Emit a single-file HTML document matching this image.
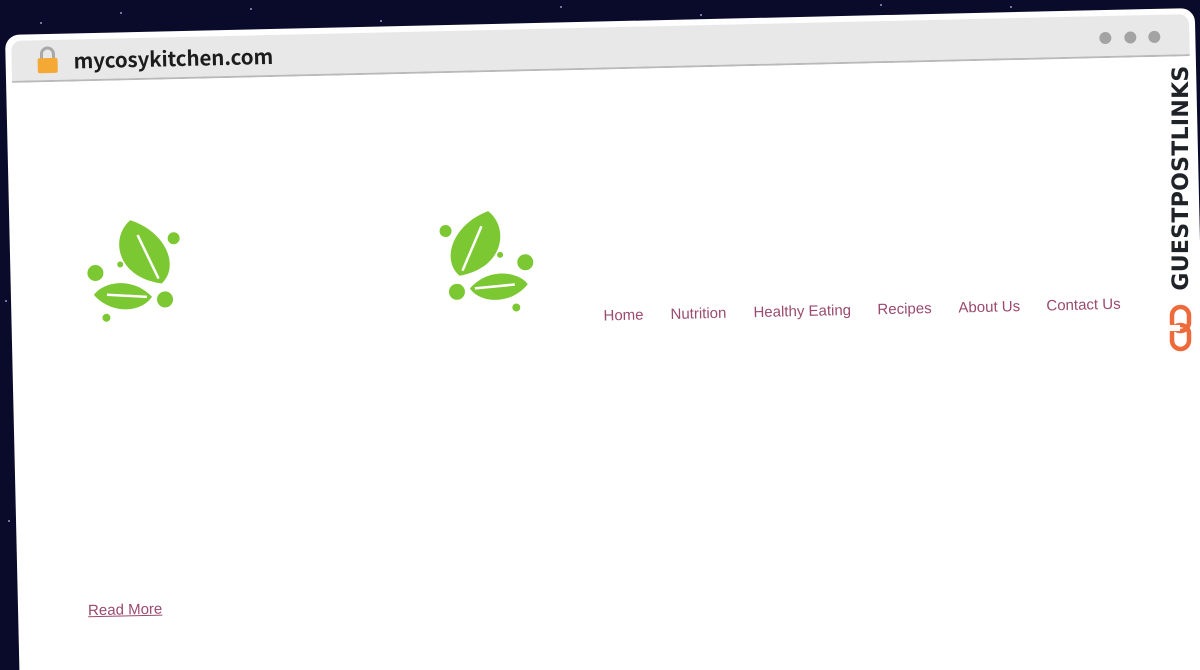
<!DOCTYPE html>
<html><head><meta charset="utf-8"><style>
html,body{margin:0;padding:0;width:1200px;height:670px;overflow:hidden;background:#0a0b2b;}
body{position:relative;font-family:"Liberation Sans",sans-serif;}
.star{position:absolute;width:2px;height:2px;background:#cfd3ff;border-radius:50%;opacity:.7}
#win{position:absolute;left:5px;top:35px;width:1190px;height:720px;background:#fff;border-radius:14px;transform-origin:0 0;transform:rotate(-1.3deg);overflow:hidden}
#bar{position:absolute;left:6px;top:6px;right:6px;height:40px;background:#e8e8e8;border-radius:10px 10px 0 0;border-bottom:2px solid #b9b9b9}
#url{position:absolute;left:62px;top:5px;font:bold 20.5px "Noto Sans CJK JP","DejaVu Sans",sans-serif;color:#1c1c1c;letter-spacing:-0.1px}
.dot{position:absolute;top:16px;width:12px;height:12px;border-radius:50%;background:#a3a3a3}
.nav{position:absolute;top:286px;font-size:15px;color:#9a4a6e;white-space:nowrap}
#rm{position:absolute;left:70px;top:569px;font-size:15px;color:#9a4a6e;text-decoration:underline}
#gpl{position:absolute;left:1165px;top:56px;width:34px;height:300px}
</style></head><body>
<div class="star" style="left:120px;top:12px"></div><div class="star" style="left:250px;top:8px"></div>
<div class="star" style="left:380px;top:20px"></div><div class="star" style="left:560px;top:6px"></div>
<div class="star" style="left:700px;top:14px"></div><div class="star" style="left:880px;top:4px"></div>
<div class="star" style="left:40px;top:22px"></div><div class="star" style="left:1010px;top:6px"></div>
<div class="star" style="left:5px;top:300px"></div><div class="star" style="left:8px;top:520px"></div>
<div id="win">
 <div id="bar">
  <svg style="position:absolute;left:24px;top:6px" width="24" height="28" viewBox="0 0 24 28"><path d="M6 13V8a6 6 0 0 1 12 0v5" fill="none" stroke="#a8a8a8" stroke-width="3"/><rect x="2" y="12" width="20" height="15" rx="2" fill="#f5a935"/></svg>
  <div id="url">mycosykitchen.com</div>
  <div class="dot" style="left:1088px"></div><div class="dot" style="left:1113px"></div><div class="dot" style="left:1137px"></div>
 </div>
 <svg style="position:absolute;left:76px;top:185px" width="100" height="106" viewBox="0 0 100 106">
  <g fill="#7cc832">
   <path d="M75 67C30 60 24 20 45 3C80 15 94 50 75 67Z"/>
   <path d="M65 80C45 58 15 65 7 77C25 98 55 95 65 80Z"/>
   <circle cx="88" cy="22" r="6"/><circle cx="9" cy="55" r="8"/><circle cx="34" cy="47" r="3"/><circle cx="78" cy="83" r="8"/><circle cx="19" cy="100" r="4"/>
  </g>
  <path d="M72 62L52 18" stroke="#fff" stroke-width="2.5"/><path d="M60 80L20 77" stroke="#fff" stroke-width="2.5"/>
 </svg>
 <svg style="position:absolute;left:424px;top:184px" width="100" height="106" viewBox="0 0 100 106">
  <g transform="translate(100,0) scale(-1,1)" fill="#7cc832">
   <path d="M75 67C30 60 24 20 45 3C80 15 94 50 75 67Z"/>
   <path d="M65 80C45 58 15 65 7 77C25 98 55 95 65 80Z"/>
   <circle cx="88" cy="22" r="6"/><circle cx="9" cy="55" r="8"/><circle cx="34" cy="47" r="3"/><circle cx="78" cy="83" r="8"/><circle cx="19" cy="100" r="4"/>
   <path d="M72 62L52 18" stroke="#fff" stroke-width="2.5"/><path d="M60 80L20 77" stroke="#fff" stroke-width="2.5"/>
  </g>
 </svg>
 <div class="nav" style="left:592px">Home</div>
 <div class="nav" style="left:659px">Nutrition</div>
 <div class="nav" style="left:742px">Healthy Eating</div>
 <div class="nav" style="left:866px">Recipes</div>
 <div class="nav" style="left:947px">About Us</div>
 <div class="nav" style="left:1035px">Contact Us</div>
 <div id="rm">Read More</div>
</div>
<div id="gpl">
 <div style="position:absolute;left:-103px;top:107px;width:240px;height:30px;transform:rotate(-90deg);font:bold 22px 'DejaVu Sans','Liberation Sans',sans-serif;color:#1f2328;text-align:center;line-height:30px;letter-spacing:0.3px">GUESTPOSTLINKS</div>
 <svg style="position:absolute;left:4px;top:248px" width="24" height="48" viewBox="0 0 24 48"><rect x="3" y="3" width="17" height="24" rx="8.5" fill="none" stroke="#ee6a3b" stroke-width="4.5"/><rect x="3" y="21" width="17" height="24" rx="8.5" fill="none" stroke="#ee6a3b" stroke-width="4.5"/><rect x="0" y="21" width="11" height="6" fill="#fff"/></svg>
</div>
</body></html>
